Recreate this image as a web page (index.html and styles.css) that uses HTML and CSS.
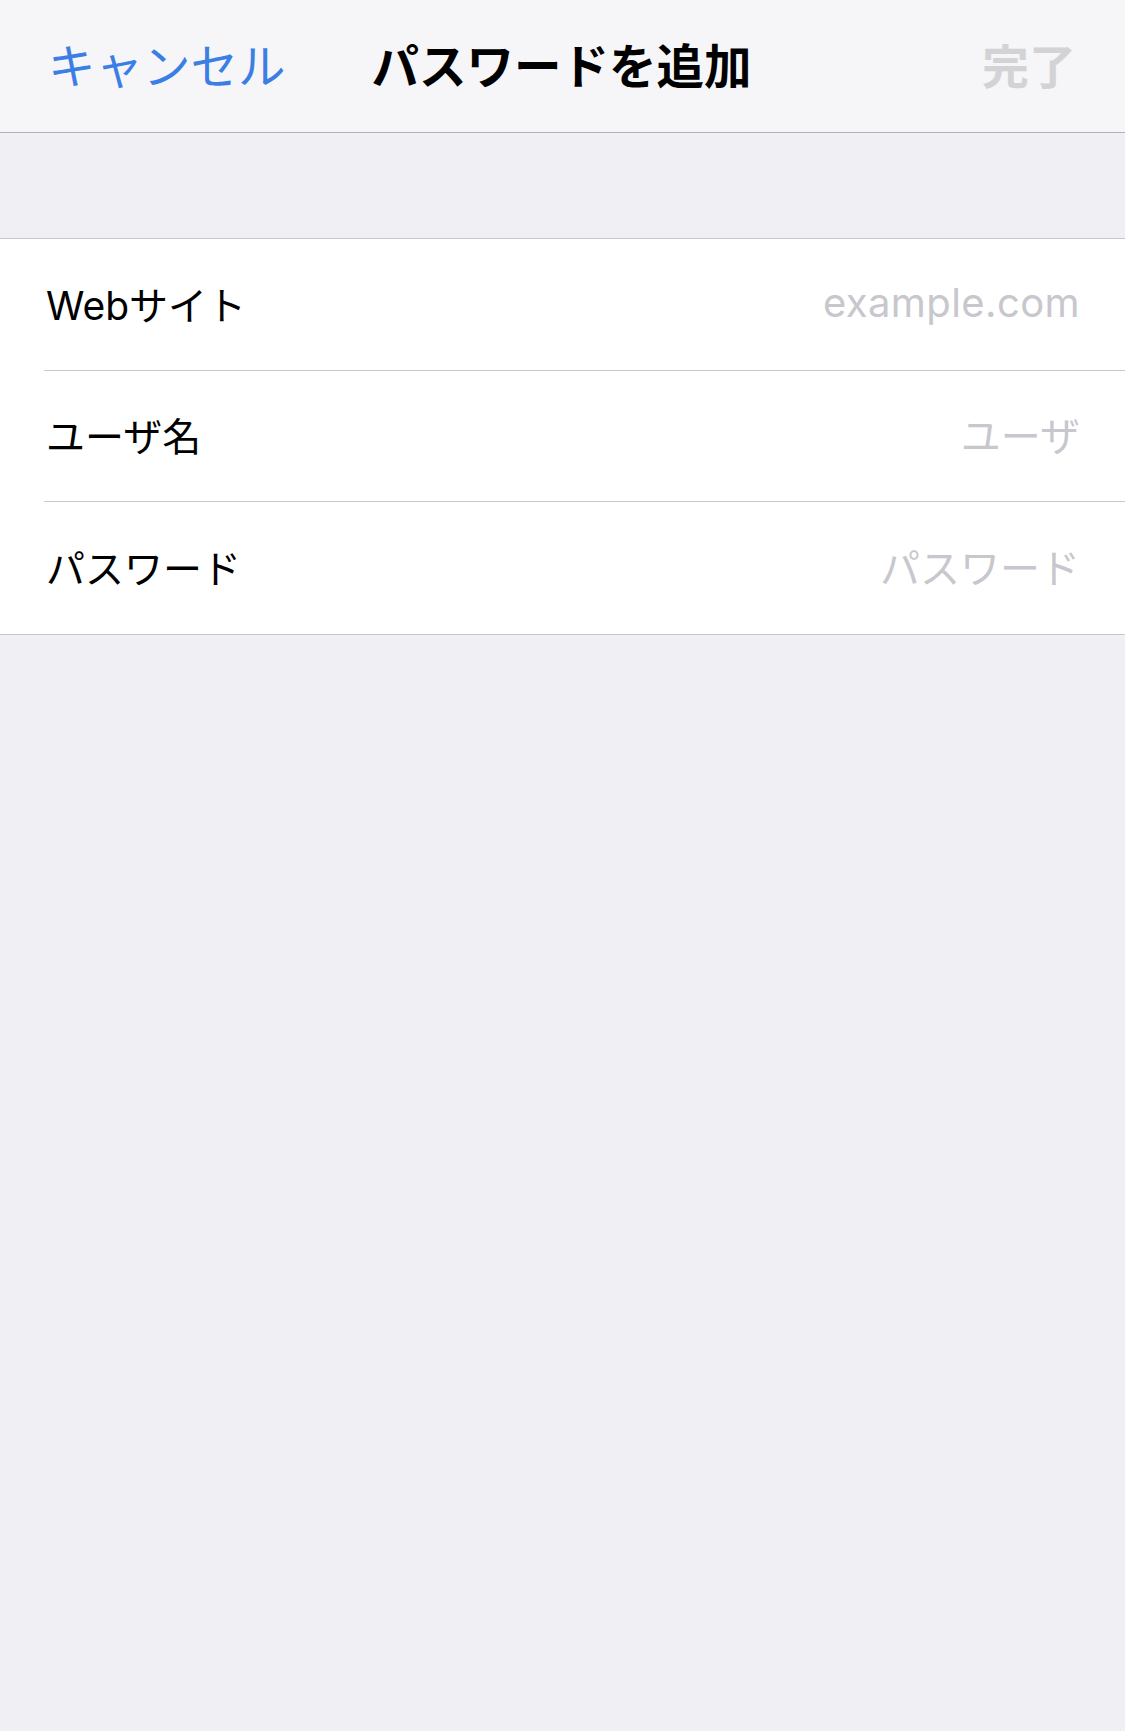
FILE: index.html
```html
<!DOCTYPE html>
<html lang="ja">
<head>
  <meta charset="UTF-8">
  <meta name="viewport" content="width=device-width, initial-scale=1">
  <title>パスワードを追加</title>
  <link rel="stylesheet" href="styles.css">
</head>
<body>

  <header class="nav">
    <span class="nav-cancel">キャンセル</span>
    <h1 class="nav-title">パスワードを追加</h1>
    <span class="nav-done">完了</span>
  </header>

  <form class="group">
    <div class="row">
      <div class="row-inner">
        <label class="row-label">Webサイト</label>
        <span class="row-placeholder latin">example.com</span>
      </div>
    </div>
    <div class="row">
      <div class="row-inner">
        <label class="row-label">ユーザ名</label>
        <span class="row-placeholder">ユーザ</span>
      </div>
    </div>
    <div class="row">
      <div class="row-inner">
        <label class="row-label">パスワード</label>
        <span class="row-placeholder">パスワード</span>
      </div>
    </div>
  </form>

</body>
</html>
```

FILE: styles.css
```css
body {
  margin: 0;
  background: #efeff4;
  font-family: Inter, "Noto Sans CJK JP", sans-serif;
  color: #000;
  min-height: 1731px;
}
.nav {
  height: 133px;
  box-sizing: border-box;
  display: flex;
  align-items: center;
  padding: 0 49px 6px 48px;
  background: #f6f6f8;
  border-bottom: 1px solid #b2b2b4;
}
.nav-cancel {
  font-size: 47.5px;
  color: #3b7fe4;
}
.nav-title {
  margin: 0 0 0 86px;
  font-size: 47.5px;
  font-weight: 700;
}
.nav-done {
  margin-left: auto;
  font-size: 47px;
  font-weight: 700;
  color: #d3d3d6;
}
.group {
  margin: 105px 0 0;
  background: #fff;
  border-top: 1px solid #c8c7cc;
  border-bottom: 1px solid #c8c7cc;
}
.row {
  padding-left: 44px;
}
.row-inner {
  height: 131.5px;
  box-sizing: border-box;
  display: flex;
  align-items: center;
  padding: 0 45px 3px 2px;
  border-bottom: 1px solid #c8c7cc;
}
.row:last-child .row-inner {
  border-bottom: none;
}
.row-label {
  font-size: 39px;
}
.row-placeholder {
  margin-left: auto;
  font-size: 40px;
  color: #c7c7cd;
}
.latin {
  letter-spacing: 0.4px;
}
```
